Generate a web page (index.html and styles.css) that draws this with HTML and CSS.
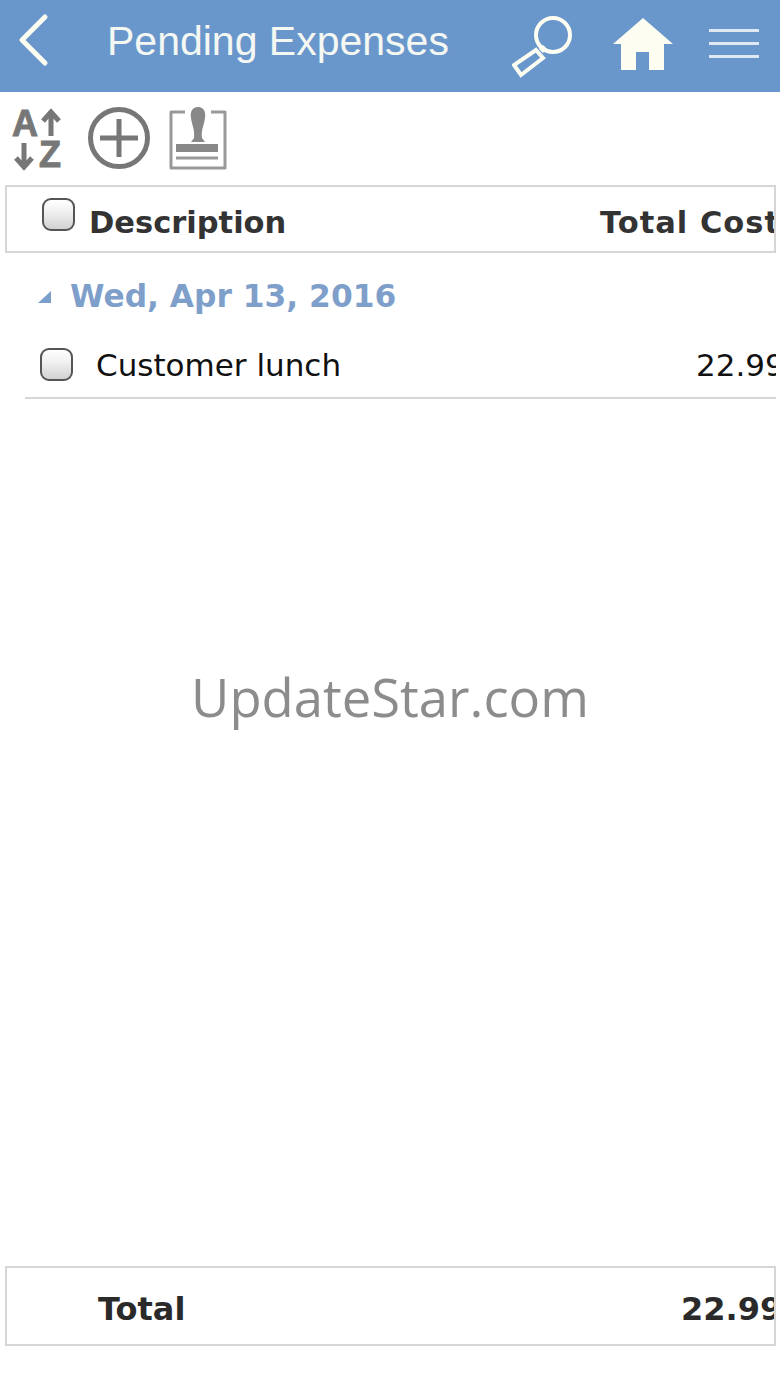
FILE: index.html
```html
<!DOCTYPE html>
<html lang="en">

<head>
    <meta charset="UTF-8">
    <title>Pending Expenses</title>
    <link rel="stylesheet" href="styles.css">
</head>

<body>
    <div class="page">
        <!-- top bar -->
        <div class="topbar">
            <svg class="back" width="34" height="56" viewBox="0 0 34 56">
                <path d="M30 5 L7 28 L30 51" fill="none" stroke="#fdfdf2" stroke-width="5" stroke-linecap="round" stroke-linejoin="round" />
            </svg>
            <div class="title">Pending Expenses</div>
            <svg class="search" width="64" height="66" viewBox="0 0 64 66">
                <circle cx="41" cy="23" r="17" fill="none" stroke="#fdfdf2" stroke-width="4" />
                <path d="M29 35 L33 39" stroke="#fdfdf2" stroke-width="6" />
                <path d="M24 38 L31 46 L9 63 L2 53 Z" fill="none" stroke="#fdfdf2" stroke-width="4" />
            </svg>
            <svg class="home" width="62" height="54" viewBox="0 0 62 54">
                <path d="M31 1 L61 27 L52 27 L52 53 L37 53 L37 35 L24 35 L24 53 L9 53 L9 27 L1 27 Z" fill="#fdfdf2" />
            </svg>
            <div class="menu">
                <span></span>
                <span></span>
                <span></span>
            </div>
        </div>

        <!-- toolbar -->
        <div class="toolbar">
            <svg class="sort" width="52" height="62" viewBox="0 0 52 62">
                <text x="0" y="29" class="sort-letter">A</text>
                <path d="M39 29 L39 7 M31 14 L39 5 L47 14" fill="none" stroke="#777" stroke-width="5" />
                <path d="M12 36 L12 58 M4 51 L12 60 L20 51" fill="none" stroke="#777" stroke-width="5" />
                <text x="27" y="60" class="sort-letter">Z</text>
            </svg>
            <svg class="add" width="62" height="62" viewBox="0 0 62 62">
                <circle cx="31" cy="31" r="28.5" fill="none" stroke="#777" stroke-width="5" />
                <path d="M31 12 L31 50 M12 31 L50 31" stroke="#777" stroke-width="5" />
            </svg>
            <svg class="stamp" width="60" height="64" viewBox="0 0 60 64">
                <path d="M17 6 L3 6 L3 62 L57 62 L57 6 L43 6" fill="none" stroke="#999" stroke-width="3" stroke-linejoin="round" />
                <path d="M30 1 C36 1 38 6 37 12 C36 20 33 23 34 32 L37 36 L23 36 L26 32 C27 23 24 20 23 12 C22 6 24 1 30 1 Z" fill="#888" />
                <path d="M8 38 L50 38 L50 46 L8 46 Z" fill="#888" />
                <path d="M8 52 L50 52" stroke="#999" stroke-width="3" />
            </svg>
        </div>

        <!-- table head -->
        <div class="box head">
            <span class="check check-head"></span>
            <span class="head-label">Description</span>
            <span class="cost">Total Cost</span>
        </div>

        <div class="group">
            <span class="arrow"></span>
            <span class="group-label">Wed, Apr 13, 2016</span>
        </div>

        <div class="item">
            <span class="check"></span>
            <span class="item-label">Customer lunch</span>
            <span class="cost">22.99</span>
        </div>

        <!-- total -->
        <div class="box foot">
            <span class="foot-label">Total</span>
            <span class="cost">22.99</span>
        </div>
    </div>

    <div class="watermark">UpdateStar.com</div>
</body>

</html>
```

FILE: styles.css
```css
* {
    padding: 0;
    margin: 0;
    box-sizing: border-box;
}

html,
body {
    height: 100%;
    overflow: hidden;
    background-color: #fff;
}

body {
    position: relative;
    font-family: "DejaVu Sans", Verdana, sans-serif;
}

.page {
    display: flex;
    flex-direction: column;
    height: 1387px;
    padding-bottom: 41px;
}

.topbar {
    display: flex;
    align-items: center;
    flex: none;
    height: 92px;
    padding-left: 15px;
    background-color: #6997cc;
}

.back {
    flex: none;
    margin-bottom: 12px;
}

.title {
    flex: none;
    width: 405px;
    margin-left: 58px;
    margin-bottom: 10px;
    font-family: "Liberation Sans", Arial, sans-serif;
    font-size: 41px;
    color: #f4f7f2;
}

.search {
    flex: none;
    margin-bottom: 2px;
}

.home {
    flex: none;
    margin-left: 36px;
    margin-bottom: 4px;
}

.menu {
    display: flex;
    flex-direction: column;
    gap: 10px;
    flex: none;
    width: 50px;
    margin-left: 35px;
    margin-bottom: 6px;
}

.menu span {
    height: 3px;
    background-color: #dfe9f3;
}

.toolbar {
    display: flex;
    align-items: center;
    flex: none;
    height: 93px;
    padding: 0 0 1px 12px;
    gap: 24px;
}

.toolbar svg {
    overflow: visible;
}

.sort-letter {
    font-family: "Liberation Sans", Arial, sans-serif;
    font-weight: bold;
    font-size: 36px;
    fill: #777;
    stroke: #777;
    stroke-width: 1px;
}

.stamp {
    margin-left: -6px;
}

.box {
    display: flex;
    flex: none;
    align-items: center;
    margin: 0 4px 0 5px;
    border: 2px solid #d6d6d6;
    overflow: hidden;
    white-space: nowrap;
}

.head {
    height: 68px;
    font-weight: bold;
    font-size: 30.5px;
    color: #333;
}

.check {
    flex: none;
    width: 33px;
    height: 33px;
    border: 2px solid #555;
    border-radius: 9px;
    background: linear-gradient(#fff, #f1f1f1 40%, #d2d2d2);
}

.check-head {
    margin-left: 35px;
    margin-bottom: 10px;
}

.head-label {
    margin-left: 14px;
    margin-top: 7px;
}

.cost {
    flex: none;
    margin-left: auto;
    width: 174px;
}

.head .cost {
    margin-top: 7px;
    letter-spacing: 1px;
}

.group {
    display: flex;
    align-items: center;
    flex: none;
    height: 86px;
    padding-left: 38px;
}

.arrow {
    width: 0;
    height: 0;
    margin-top: 1px;
    border-bottom: 12px solid #7b9fcb;
    border-left: 13px solid transparent;
}

.group-label {
    margin-left: 19px;
    font-weight: bold;
    font-size: 31.3px;
    color: #7f9fcb;
}

.item {
    display: flex;
    align-items: center;
    flex: none;
    width: 751px;
    height: 60px;
    margin-left: 25px;
    padding-left: 15px;
    padding-bottom: 8px;
    border-bottom: 2px solid #d6d6d6;
    overflow: hidden;
    white-space: nowrap;
    font-size: 31px;
    color: #111;
}

.item-label {
    margin-left: 23px;
    margin-top: 2px;
}

.item .cost {
    width: 80px;
    margin-top: 2px;
}

.foot {
    height: 80px;
    margin-top: auto;
    font-weight: bold;
    font-size: 32px;
    color: #2a2a2a;
}

.foot-label {
    margin-left: 91px;
    margin-top: 6px;
}

.foot .cost {
    width: 93px;
    margin-top: 6px;
}

.watermark {
    position: absolute;
    left: 0;
    right: 0;
    top: 661px;
    text-align: center;
    font-family: "Open Sans", sans-serif;
    font-size: 52.6px;
    color: #8c8c8c;
}
```
